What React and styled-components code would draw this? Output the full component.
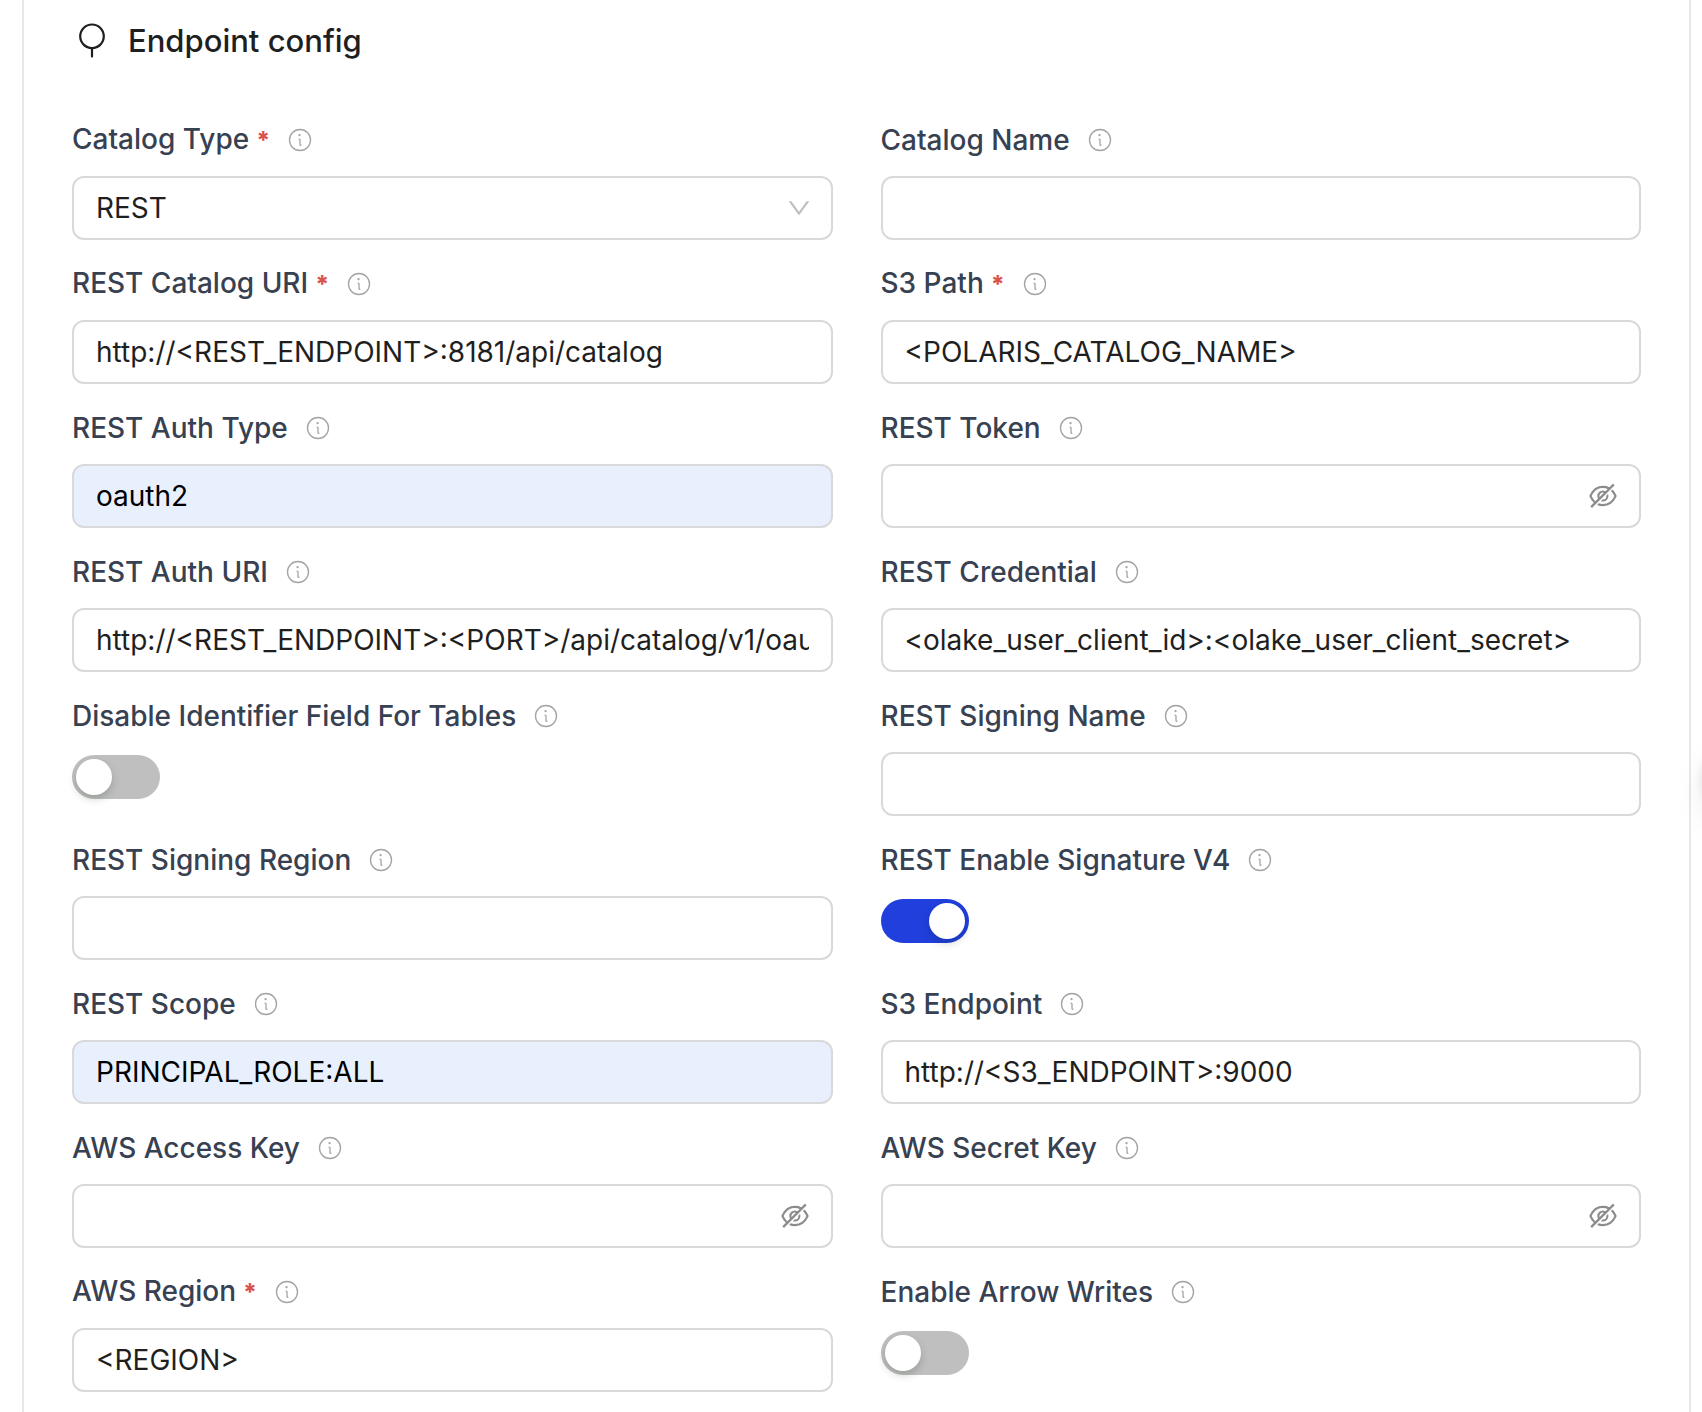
import React, { useState } from "react"
import styled, { createGlobalStyle } from "styled-components"
import { AiOutlineDown, AiOutlineEye, AiOutlineEyeInvisible } from "react-icons/ai"
import { PiInfoLight } from "react-icons/pi"


const GlobalStyle = createGlobalStyle`
  * {
    box-sizing: border-box;
  }

  body {
    margin: 0;
    background: #fff;
    color: #1f1f1f;
    font-family: Inter, "Liberation Sans", sans-serif;
    font-size: 28px;
    overflow-x: hidden;
  }
`

const Card = styled.main`
  margin: 0 11px 0 22px;
  padding: 17px 48px 28px;
  border: solid #e5e7eb;
  border-width: 0 2px;
`

const Header = styled.header`
  display: flex;
  align-items: center;
  gap: 16px;
  margin-bottom: 55px;

  svg {
    width: 40px;
    height: 40px;
  }
`

const Title = styled.h2`
  margin: 0;
  font-size: 31px;
  font-weight: 500;
  line-height: 48px;
`

const Grid = styled.form`
  display: grid;
  grid-template-columns: 1fr 1fr;
  gap: 24px 48px;
`

const Field = styled.div`
  display: flex;
  flex-direction: column;
  gap: 16px;
  min-width: 0;
`

const LabelRow = styled.div`
  display: flex;
  align-items: center;
  gap: 16px;
  height: 40px;
`

const Label = styled.label`
  color: #374151;
  font-weight: 500;
  line-height: 40px;
  white-space: nowrap;
`

const Required = styled.span`
  margin-left: 7px;
  color: #d9534f;
  font-size: 24px;
  font-weight: 800;
`

const IconButton = styled.button`
  display: flex;
  padding: 0;
  border: 0;
  background: none;
  color: ${({color}) => color};
  font-size: 28px;
  cursor: pointer;
`

const Control = styled.div`
  display: flex;
  align-items: center;
  height: 64px;
  padding: 0 22px;
  border: 2px solid #d9d9d9;
  border-radius: 12px;
  background: ${({$filled}) => $filled ? "#e8f0fe" : "#fff"};
  color: ${({$filled}) => $filled ? "#000" : "#1f1f1f"};

  &:focus-within {
    border-color: #203fdd;
  }
`

const SelectControl = styled(Control)`
  padding-right: 20px;
`

const Input = styled.input`
  flex: 1;
  min-width: 0;
  height: 44px;
  padding: 0;
  border: 0;
  outline: 0;
  background: none;
  color: inherit;
  font: inherit;
`

const Select = styled.select`
  flex: 1;
  height: 44px;
  padding: 0;
  border: 0;
  outline: 0;
  appearance: none;
  background: none;
  color: inherit;
  font: inherit;
`

// The Ai glyphs keep a wide margin in their own view box, so crop it
const glyphBox = {viewBox: "64 64 896 896"}

const Arrow = styled(AiOutlineDown).attrs(glyphBox)`
  width: 24px;
  height: 24px;
  color: #bfbfbf;
  pointer-events: none;
`

const SwitchRow = styled.div`
  display: flex;
  align-items: center;
  height: 50px;
`

const Switch = styled.input.attrs({type: "checkbox", role: "switch"})`
  display: flex;
  align-items: center;
  width: 88px;
  height: 44px;
  margin: 0;
  padding: 4px;
  border-radius: 22px;
  appearance: none;
  background: #bfbfbf;
  cursor: pointer;

  &::before {
    content: "";
    width: 36px;
    height: 36px;
    border-radius: 50%;
    background: #fff;
    box-shadow: 0 4px 8px rgba(0, 35, 11, 0.2);
  }

  &:checked {
    justify-content: flex-end;
    background: #203fdd;
  }
`

// Round handle of the help drawer, tucked past the right edge of the window
const DrawerHandle = styled.div`
  position: fixed;
  top: 744px;
  right: -72px;
  width: 72px;
  height: 72px;
  border-radius: 50%;
  background: #fff;
  box-shadow: 0 12px 32px rgba(0, 0, 0, 0.08), 0 0 12px rgba(0, 0, 0, 0.1);
`

const fields = [
  {id: "catalog_type", label: "Catalog Type", type: "select", required: true, options: ["REST", "Glue", "JDBC", "Hive"]},
  {id: "catalog_name", label: "Catalog Name"},
  {id: "rest_catalog_url", label: "REST Catalog URI", required: true, value: "http://<REST_ENDPOINT>:8181/api/catalog"},
  {id: "iceberg_s3_path", label: "S3 Path", required: true, value: "<POLARIS_CATALOG_NAME>"},
  {id: "rest_auth_type", label: "REST Auth Type", value: "oauth2", filled: true},
  {id: "token", label: "REST Token", type: "password"},
  {id: "oauth2_uri", label: "REST Auth URI", value: "http://<REST_ENDPOINT>:<PORT>/api/catalog/v1/oauth/tokens"},
  {id: "credential", label: "REST Credential", value: "<olake_user_client_id>:<olake_user_client_secret>"},
  {id: "no_identifier_fields", label: "Disable Identifier Field For Tables", type: "switch"},
  {id: "rest_signing_name", label: "REST Signing Name"},
  {id: "rest_signing_region", label: "REST Signing Region"},
  {id: "rest_signing_v4", label: "REST Enable Signature V4", type: "switch", value: true},
  {id: "scope", label: "REST Scope", value: "PRINCIPAL_ROLE:ALL", filled: true},
  {id: "s3_endpoint", label: "S3 Endpoint", value: "http://<S3_ENDPOINT>:9000"},
  {id: "aws_access_key", label: "AWS Access Key", type: "password"},
  {id: "aws_secret_key", label: "AWS Secret Key", type: "password"},
  {id: "aws_region", label: "AWS Region", required: true, value: "<REGION>"},
  {id: "arrow_writes", label: "Enable Arrow Writes", type: "switch"},
]

const EndpointIcon = () => (
  <svg viewBox="0 0 40 40" fill="none" stroke="currentColor" strokeWidth="2.2" strokeLinecap="round" aria-hidden="true">
    <circle cx="20" cy="15.3" r="11.8" />
    <path d="M20 27.1V35.6" />
  </svg>
)

const PasswordControl = ({id}) => {
  const [visible, setVisible] = useState(false)
  return (
    <Control>
      <Input id={id} type={visible ? "text" : "password"} autoComplete="off" />
      <IconButton
        type="button"
        color="#8c8c8c"
        aria-label={visible ? "Hide value" : "Show value"}
        onClick={() => setVisible(!visible)}
      >
        {visible ? <AiOutlineEye {...glyphBox} /> : <AiOutlineEyeInvisible {...glyphBox} />}
      </IconButton>
    </Control>
  )
}

const FieldControl = ({field}) => {
  const {id, type, value, filled, options, required} = field

  if (type === "switch") {
    return (
      <SwitchRow>
        <Switch id={id} defaultChecked={value} />
      </SwitchRow>
    )
  }

  if (type === "password") {
    return <PasswordControl id={id} />
  }

  if (type === "select") {
    return (
      <SelectControl>
        <Select id={id} required={required}>
          {options.map(option => <option key={option}>{option}</option>)}
        </Select>
        <Arrow />
      </SelectControl>
    )
  }

  return (
    <Control $filled={filled}>
      <Input id={id} type="text" defaultValue={value} required={required} spellCheck={false} />
    </Control>
  )
}

const App = () => (
  <>
    <GlobalStyle />
    <Card>
      <Header>
        <EndpointIcon />
        <Title>Endpoint config</Title>
      </Header>
      <Grid>
        {fields.map(field =>
          <Field key={field.id}>
            <LabelRow>
              <Label htmlFor={field.id}>
                {field.label}
                {field.required && <Required>*</Required>}
              </Label>
              <IconButton type="button" color="#a3a3a3" aria-label={`About ${field.label}`}>
                <PiInfoLight />
              </IconButton>
            </LabelRow>
            <FieldControl field={field} />
          </Field>
        )}
      </Grid>
    </Card>
    <DrawerHandle />
  </>
)

export default App
